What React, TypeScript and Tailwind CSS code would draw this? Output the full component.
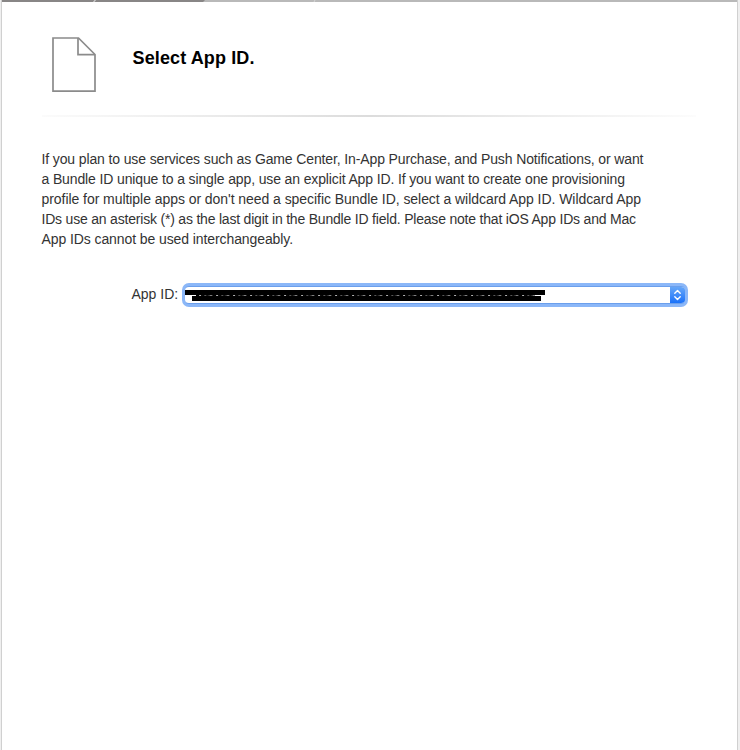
const paragraph = [
  { text: "If you plan to use services such as Game Center, In-App Purchase, and Push Notifications, or want", spacing: "tracking-[-0.125px]" },
  { text: "a Bundle ID unique to a single app, use an explicit App ID. If you want to create one provisioning", spacing: "tracking-[-0.13px]" },
  { text: "profile for multiple apps or don't need a specific Bundle ID, select a wildcard App ID. Wildcard App", spacing: "tracking-[-0.055px]" },
  { text: "IDs use an asterisk (*) as the last digit in the Bundle ID field. Please note that iOS App IDs and Mac", spacing: "tracking-[-0.2px]" },
  { text: "App IDs cannot be used interchangeably.", spacing: "tracking-[-0.09px]" },
];

function ProgressBar() {
  return (
    <svg className="block h-[2px] w-[735px]" viewBox="0 0 735 2">
      <rect width="735" height="2" fill="#b9b9b9" />
      <path d="M0 0H203L201 2H0Z" fill="#888686" />
      <path d="M93.5 0L91.5 2" stroke="#d0d0d0" strokeWidth="1.2" />
      <path d="M313 0L312 2" stroke="#d6d6d6" strokeWidth="1" />
    </svg>
  );
}

function FileIcon() {
  return (
    <svg className="h-[56px] w-[45px]" viewBox="0 0 45 56" fill="none" stroke="#8b8b8b" strokeWidth="1.7">
      <path d="M1 1H26.5L43 17.5V54.2H1Z" />
      <path d="M26 1V17.7H43" />
    </svg>
  );
}

function AppIdSelect() {
  return (
    <div className="flex h-6 w-[506px] rounded-[7px] bg-[#8bb7f8] p-[3px]">
      <div className="flex h-[18px] w-full overflow-hidden rounded-[4px] border-y border-[#6b9fec] bg-white">
        <div className="flex flex-1 flex-col pt-[3px]">
          <div className="h-[5px] w-[360px] bg-black" />
          <div className="ml-[11px] h-px w-[339px] bg-[repeating-linear-gradient(90deg,#000_0px,#000_3px,#999_3px,#bbb_5px,#111_5px,#000_8px,#777_9px,#000_11px,#555_14px,#aaa_15px,#000_17px)]" />
          <div className="ml-[7px] h-[5px] w-[349px] bg-black" />
        </div>
        <div className="-my-px flex w-[15px] items-center justify-center bg-gradient-to-b from-[#69a9f8] to-[#0f6df9]">
          <svg width="9" height="12" viewBox="0 0 9 12" fill="none" stroke="white" strokeWidth="1.4" strokeLinecap="round" strokeLinejoin="round">
            <path d="M1.8 4.2L4.5 1.5L7.2 4.2M1.8 7.8L4.5 10.5L7.2 7.8" />
          </svg>
        </div>
      </div>
    </div>
  );
}

export default function App() {
  return (
    <div className="flex h-[750px] w-[740px] overflow-hidden bg-[#efefef] font-['Liberation_Sans',Arial,sans-serif]">
      <main className="ml-px w-[737px] border-x border-[#d0d0d0] bg-white">
        <ProgressBar />
        <header className="ml-[50px] mt-[35px] flex h-[56px]">
          <FileIcon />
          <h1 className="ml-[35.5px] mt-[9px] whitespace-nowrap text-[18px] font-bold leading-6 tracking-[0.12px] text-black">Select App ID.</h1>
        </header>
        <div className="ml-10 mt-[22px] h-[2px] w-[654px] bg-gradient-to-r from-[#fbfbfb] via-[#dcdcdc] to-[#fcfcfc]" />
        <p className="ml-[39.5px] mt-8 text-[14px] leading-5 text-[#333]">
          {paragraph.map((line) => (
            <span key={line.text} className={`block whitespace-nowrap ${line.spacing}`}>{line.text}</span>
          ))}
        </p>
        <div className="ml-[129px] mt-[34px] flex h-6 text-[14px] text-[#333]">
          <label className="w-[51px] whitespace-nowrap pl-[0.5px] leading-[23px]">App ID:</label>
          <AppIdSelect />
        </div>
      </main>
    </div>
  );
}
